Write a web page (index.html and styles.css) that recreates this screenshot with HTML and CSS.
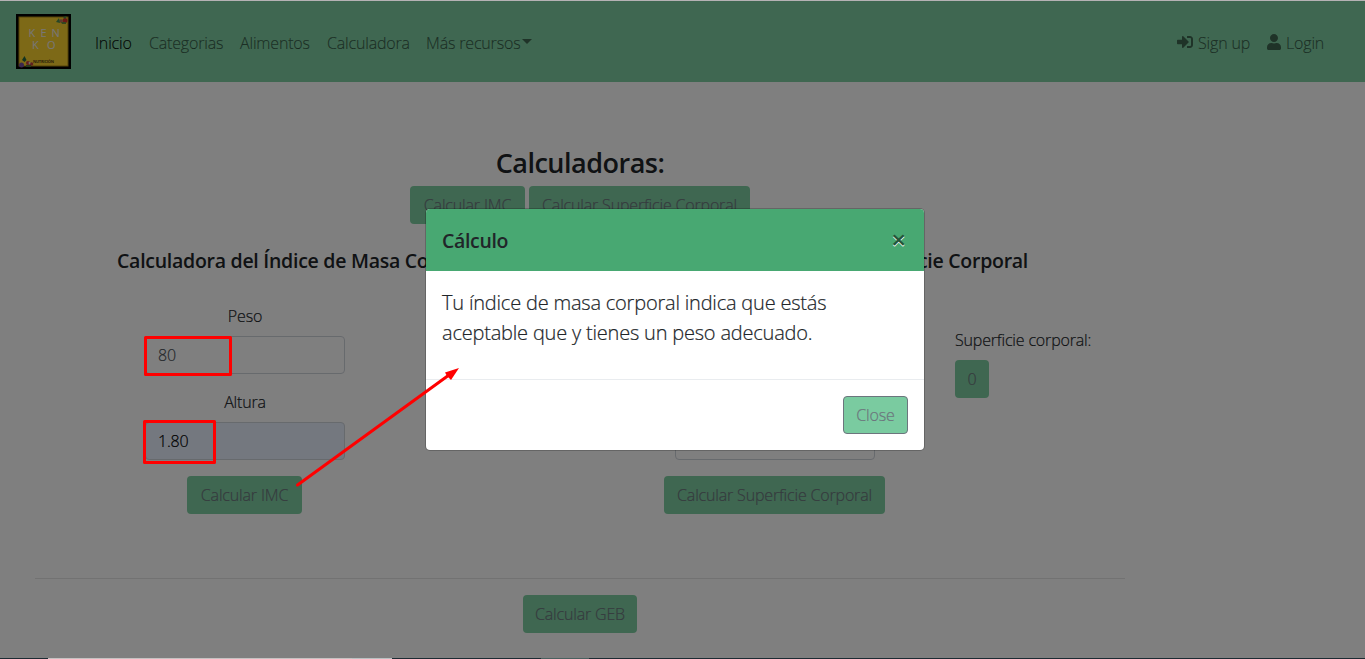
FILE: index.html
```html
<!DOCTYPE html>
<html lang="es">
<head>
<meta charset="utf-8">
<title>Kenko - Calculadora</title>
<link rel="stylesheet" href="styles.css">
</head>
<body>
<nav class="navbar">
  <a class="brand">
    <svg width="55" height="55" viewBox="0 0 55 55">
      <rect width="55" height="55" fill="#000"/>
      <rect x="3" y="3" width="49" height="49" fill="#fbd22e"/>
      <rect x="3" y="3" width="49" height="49" fill="none" stroke="#a98815"/>
      <g class="logo-letters"><text x="12.500" y="23">K</text><text x="24.500" y="23">E</text><text x="35.500" y="23">N</text><text x="16" y="35">K</text><text x="31" y="35">O</text></g>
      <text class="logo-sub" x="17" y="49" textLength="21">NUTRICIÓN</text>
      <circle cx="49" cy="6.500" r="2.500" fill="#d8332c"/><circle cx="45" cy="7" r="1.800" fill="#b8705e"/><path d="M40 8l3-4 1 5zM47 3l4-1-2 3z" fill="#4b8c4f"/><path d="M45 8h5v2h-4z" fill="#6b8c3f"/>
      <circle cx="5.500" cy="51" r="2.500" fill="#76509e"/><path d="M6 46l2.500-4 2 4-2 2z" fill="#286a42"/><circle cx="12" cy="49" r="2" fill="#c33d42"/><circle cx="15.500" cy="50" r="1.800" fill="#be423d"/><circle cx="13.500" cy="49" r="1" fill="#ddd"/><path d="M10 51h5v2h-5z" fill="#526e36"/>
    </svg>
  </a>
  <div class="nav-list">
    <a class="nav-link active w-ini">Inicio</a>
    <a class="nav-link w-cat">Categorias</a>
    <a class="nav-link w-ali">Alimentos</a>
    <a class="nav-link w-cal">Calculadora</a>
    <a class="nav-link w-mas">Más recursos<i class="caret"></i></a>
  </div>
  <div class="nav-list nav-right">
    <a class="nav-link w-sign"><svg width="16" height="16" viewBox="0 0 512 512"><path fill="currentColor" d="M416 448h-84c-6.600 0-12-5.400-12-12v-40c0-6.600 5.400-12 12-12h84c17.700 0 32-14.300 32-32V160c0-17.700-14.300-32-32-32h-84c-6.600 0-12-5.400-12-12V76c0-6.600 5.400-12 12-12h84c53 0 96 43 96 96v192c0 53-43 96-96 96zm-47-209L201 71c-15-15-41-4.500-41 17v96H24c-13.300 0-24 10.700-24 24v96c0 13.300 10.700 24 24 24h136v96c0 21.500 26 32 41 17l168-168c9.300-9.400 9.300-24.600 0-34z"/></svg><span>Sign up</span></a>
    <a class="nav-link w-login"><svg width="14" height="16" viewBox="0 0 448 512"><path fill="currentColor" d="M224 256c70.700 0 128-57.300 128-128S294.700 0 224 0 96 57.300 96 128s57.300 128 128 128zm89.600 32h-16.700c-22.200 10.200-46.900 16-72.900 16s-50.600-5.800-72.900-16h-16.700C60.200 288 0 348.200 0 422.400V464c0 26.500 21.500 48 48 48h352c26.500 0 48-21.500 48-48v-41.600c0-74.200-60.200-134.400-134.400-134.400z"/></svg><span>Login</span></a>
  </div>
</nav>
<main class="content">
  <h3 class="title">Calculadoras:</h3>
  <div class="buttons">
    <button class="btn btn-imc">Calcular IMC</button>
    <button class="btn btn-sup">Calcular Superficie Corporal</button>
  </div>
  <div class="headings">
    <h5 class="heading">Calculadora del Índice de Masa Corporal</h5>
    <h5 class="heading">Superficie Corporal</h5>
  </div>
  <div class="calculators">
    <form class="calc">
      <label class="label">Peso</label>
      <div class="field">80</div>
      <label class="label">Altura</label>
      <div class="field autofill">1.80</div>
      <button type="button" class="btn btn-imc">Calcular IMC</button>
    </form>
    <form class="calc calc-surface">
      <div class="field"></div>
      <button type="button" class="btn btn-sup">Calcular Superficie Corporal</button>
    </form>
    <div class="result">
      <span class="result-label">Superficie corporal:</span>
      <button class="btn btn-zero">0</button>
    </div>
  </div>
  <hr class="divider">
  <div class="geb"><button class="btn btn-geb">Calcular GEB</button></div>
</main>
<div class="backdrop">
  <section class="modal">
    <header class="modal-header"><h5 class="modal-title">Cálculo</h5><span class="modal-x">×</span></header>
    <div class="modal-body">Tu índice de masa corporal indica que estás<br>aceptable que y tienes un peso adecuado.</div>
    <footer class="modal-footer"><button class="btn btn-close">Close</button></footer>
  </section>
</div>
<div class="edge-top"></div>
<div class="edge-bottom"><i class="seg-light"></i><i class="seg-pale"></i><i class="seg-dark"></i><i class="seg-mid"></i></div>
<svg class="marks" width="1365" height="659" viewBox="0 0 1365 659">
  <g fill="none" stroke="#f00" stroke-width="3" stroke-linejoin="round">
    <rect x="145.500" y="337.500" width="85" height="37"/>
    <rect x="144.500" y="421.500" width="70" height="41"/>
    <path d="M297.500 485L449 375" stroke-linecap="round"/>
  </g>
  <path d="M459 368L445 372.500L447 376L451 380Z" fill="#f00"/>
</svg>
</body>
</html>
```
FILE: styles.css
```css
* { box-sizing: border-box; }
body { margin: 0; width: 1365px; height: 659px; overflow: hidden; position: relative; background: #fff; color: #212529; font: 300 16px/24px "Open Sans", "Noto Sans", sans-serif; letter-spacing: -.17px; -webkit-text-stroke: .2px currentColor; }
h3, h5 { margin: 0; -webkit-text-stroke: 0; }

.navbar { height: 82px; padding: 1px 40px 0 16px; display: flex; align-items: center; background: #7ecfa2; }
.brand { display: block; height: 55px; margin-right: 24px; }
.logo-letters { font: 500 11px "Open Sans", sans-serif; fill: #eee; letter-spacing: 0; }
.logo-sub { font: 700 4px "Open Sans", sans-serif; fill: #534614; letter-spacing: 0; }
.brand svg { -webkit-text-stroke: 0; }
.nav-list { display: flex; gap: 16px; padding-top: 2px; }
.nav-right { margin-left: auto; }
.nav-link { color: rgba(0, 0, 0, .5); white-space: nowrap; display: flex; align-items: center; }
.nav-link.active { color: rgba(0, 0, 0, .9); }
.nav-link svg { margin: -2px 5px 0 0; flex: none; }
.w-ini { width: 38px; }
.w-cat { width: 75px; }
.w-ali { width: 71px; }
.w-cal { width: 83px; }
.w-mas { width: 106px; }
.w-sign { width: 74px; }
.w-login { width: 58px; }
.caret { margin: -3px 0 0 auto; border: 5px solid transparent; border-top-color: currentColor; border-bottom: 0; }

.content { width: 1090px; margin-left: 35px; padding-top: 64px; }
.title { font-size: 27px; font-weight: 600; line-height: 34px; letter-spacing: -.5px; text-align: center; }
.buttons { display: flex; justify-content: center; gap: 4px; margin-top: 6px; }
.btn { height: 38px; padding: 0; border: 0; border-radius: 4px; background: #7ecfa2; color: #6c757d; font: inherit; letter-spacing: inherit; white-space: nowrap; }
.btn-imc { width: 115px; }
.btn-sup { width: 221px; }
.btn-zero { width: 34px; }
.btn-geb { width: 114px; }
.headings { display: flex; justify-content: space-between; padding: 0 97px 0 82px; margin-top: 25px; }
.heading { font-size: 19.500px; font-weight: 600; line-height: 24px; letter-spacing: -.27px; }
.calculators { display: flex; margin-top: 31px; padding-left: 110px; }
.calc { width: 200px; margin-right: 330px; display: flex; flex-direction: column; align-items: center; }
.calc-surface { margin-right: 80px; padding-top: 118px; }
.calc .btn { flex: none; margin: 16px 1px 0 0; }
.label + .field { margin-top: 8px; }
.field + .label { margin-top: 16px; }
.field { width: 200px; height: 38px; padding: 6px 12px; border: 1px solid #ced4da; border-radius: 4px; background: #fff; color: #495057; }
.field.autofill { background: #e8f0fe; color: #000; }
.result { padding-top: 24px; display: flex; flex-direction: column; align-items: flex-start; gap: 8px; }
.divider { height: 1px; margin: 64px 0 16px; border: 0; background: rgba(0, 0, 0, .1); }
.geb { text-align: center; }

.backdrop { position: absolute; inset: 0; display: flex; justify-content: center; align-items: flex-start; padding-top: 208px; padding-right: 15px; background: rgba(0, 0, 0, .5); }
.modal { width: 500px; border: 1px solid rgba(0, 0, 0, .2); border-radius: 5px; background: #fff; background-clip: padding-box; }
.modal-header { height: 62px; padding: 0 18px 0 16px; border-radius: 4px 4px 0 0; display: flex; align-items: center; justify-content: space-between; background: #48a872; }
.modal-title { padding-top: 2px; font-size: 19.500px; font-weight: 600; line-height: 30px; letter-spacing: -.35px; }
.modal-x { margin-top: -2px; font-size: 26px; line-height: 24px; font-weight: 600; color: #245439; text-shadow: 0 1px 0 #fff; -webkit-text-stroke: 0; }
.modal-body { height: 108px; padding: 17px 16px; font-size: 20px; line-height: 30px; letter-spacing: -.2px; white-space: nowrap; }
.modal-footer { height: 71px; padding: 16px; border-top: 1px solid #e9ecef; display: flex; justify-content: flex-end; }
.btn-close { width: 65px; border: 1px solid #6c757d; background: #7acba0; }

.edge-top { position: absolute; inset: 0 0 auto; height: 1px; background: #b5b2b4; }
.edge-bottom { position: absolute; inset: auto 0 0; height: 1px; padding-left: 48px; display: flex; background: #1c2b33; }
.seg-light { width: 304px; background: #c5c2c2; }
.seg-pale { width: 40px; background: #b9c1c2; }
.seg-dark { width: 149px; }
.seg-mid { width: 48px; background: #4a605f; }
.marks { position: absolute; inset: 0; }
```
